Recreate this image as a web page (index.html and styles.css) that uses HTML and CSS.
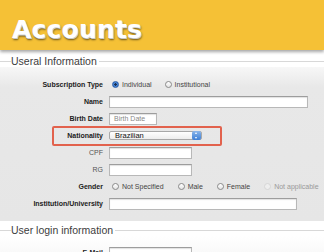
FILE: index.html
```html
<!doctype html>
<html>
<head>
	<meta charset="utf-8" />
	<title>Accounts</title>
	<link rel="stylesheet" href="styles.css">
</head>
<body>
	<header class="banner">
		<h1>Accounts</h1>
	</header>

	<section class="group">
		<div class="legend"><span>Useral Information</span></div>
		<div class="rows">
			<div class="row">
				<label>Subscription Type</label>
				<div class="choices">
					<span class="opt"><i class="radio on"></i>Individual</span>
					<span class="opt"><i class="radio"></i>Institutional</span>
				</div>
			</div>
			<div class="row">
				<label>Name</label>
				<span class="input w-name"></span>
			</div>
			<div class="row">
				<label>Birth Date</label>
				<span class="input w-date hint">Birth Date</span>
			</div>
			<div class="row mark">
				<label>Nationality</label>
				<span class="select">Brazilian<i class="stepper"></i></span>
			</div>
			<div class="row">
				<label class="plain">CPF</label>
				<span class="input w-short"></span>
			</div>
			<div class="row">
				<label class="plain">RG</label>
				<span class="input w-short"></span>
			</div>
			<div class="row">
				<label>Gender</label>
				<div class="choices">
					<span class="opt g1"><i class="radio"></i>Not Specified</span>
					<span class="opt g2"><i class="radio"></i>Male</span>
					<span class="opt g3"><i class="radio"></i>Female</span>
					<span class="opt off"><i class="radio"></i>Not applicable</span>
				</div>
			</div>
			<div class="row">
				<label>Institution/University</label>
				<span class="input w-inst"></span>
			</div>
		</div>
	</section>

	<section class="group login">
		<div class="legend"><span>User login information</span></div>
		<div class="rows">
			<div class="row">
				<label>E-Mail</label>
				<span class="input w-short"></span>
			</div>
		</div>
	</section>
</body>
</html>
```

FILE: styles.css
```css
*, *::before, *::after {
	box-sizing: border-box;
}

html, body {
	margin: 0;
	padding: 0;
}

body {
	width: 324px;
	height: 252px;
	overflow: hidden;
	background: #fff;
	font: normal 7px "Liberation Sans", Arial, sans-serif;
	color: #333;
}

.banner {
	height: 50px;
	padding: 15px 0 0 12px;
	background: #f5c136;
	box-shadow: 0 2px 3px rgba(0,0,0,0.35);
	position: relative;
}

.banner h1 {
	margin: 0;
	font: bold 25px "DejaVu Sans", sans-serif;
	color: #fff;
	letter-spacing: 0.2px;
	text-shadow: 1px 1px 0 #c9c9c9, 1px 2px 2px rgba(0,0,0,0.55);
}

.legend {
	display: flex;
	align-items: center;
	height: 12px;
	padding-left: 11px;
	position: relative;
	background: #fff;
}

.legend::before {
	content: "";
	position: absolute;
	left: 0;
	right: 0;
	top: 50%;
	border-top: 1px solid #d8d8d8;
}

.legend span {
	position: relative;
	background: #fff;
	padding-right: 2px;
	font-size: 10.5px;
	color: #3d3d3d;
}

.group {
	margin-top: 5px;
}

.rows {
	padding: 9px 0 9px;
	background: linear-gradient(#f7f7f7, #e8e8e8 20px, #e6e6e6);
}

.row {
	display: flex;
	align-items: center;
	height: 17px;
	position: relative;
	white-space: nowrap;
}

.row label {
	width: 103px;
	flex: none;
	text-align: right;
	font-weight: bold;
	font-size: 7px;
	color: #222;
	margin-right: 6px;
}

.row label.plain {
	font-weight: normal;
	color: #555;
}

.mark::after {
	content: "";
	position: absolute;
	left: 52px;
	width: 170px;
	top: -1px;
	height: 20px;
	border: 2px solid #e2624d;
	border-radius: 2px;
}

.input {
	display: inline-flex;
	align-items: center;
	height: 12px;
	padding-left: 4px;
	background: #fff;
	border: 1px solid #b8b8b8;
	border-top-color: #9d9d9d;
	box-shadow: inset 0 1px 1px rgba(0,0,0,0.12);
	font-size: 7px;
}

.hint {
	color: #888;
}

.w-name { width: 199px; }
.w-date { width: 48px; }
.w-short { width: 83px; }
.w-inst { width: 188px; }

.select {
	position: relative;
	display: inline-flex;
	align-items: center;
	width: 93px;
	height: 9px;
	padding-left: 5px;
	border: 1px solid #a8a8a8;
	border-radius: 2px;
	background: linear-gradient(#fff, #ededed);
	font-size: 7.5px;
	color: #111;
}

.stepper {
	position: absolute;
	right: 0;
	top: -1px;
	width: 9px;
	height: 9px;
	border-radius: 2px;
	background: linear-gradient(#8bb6ea, #3d7fd6);
}

.stepper::before, .stepper::after {
	content: "";
	position: absolute;
	left: 3px;
	border-left: 1.5px solid transparent;
	border-right: 1.5px solid transparent;
}

.stepper::before {
	top: 1px;
	border-bottom: 2px solid #fff;
}

.stepper::after {
	bottom: 1px;
	border-top: 2px solid #fff;
}

.choices {
	display: flex;
	align-items: center;
	margin-left: 3px;
}

.opt {
	flex: none;
	display: inline-flex;
	align-items: center;
	gap: 3px;
	color: #444;
	margin-right: 13px;
}

.g1 { margin-right: 14px; }
.g2 { margin-right: 14px; }
.g3 { margin-right: 14px; }

.opt.off {
	color: #999;
}

.radio {
	flex: none;
	display: inline-block;
	width: 7px;
	height: 7px;
	border-radius: 50%;
	border: 1px solid #8a8a8a;
	background: linear-gradient(#fff, #e4e4e4);
}

.radio.on {
	border-color: #2d5ea8;
	background: radial-gradient(circle, #1b2f52 0 1px, #4d8ee0 1.5px, #2b63b6);
}

.off .radio {
	border-color: #d6d6d6;
	background: #eee;
}

.login {
	margin-top: 3px;
}

.login .rows {
	padding-top: 8px;
	background: linear-gradient(#fff, #f3f3f3);
}
```
